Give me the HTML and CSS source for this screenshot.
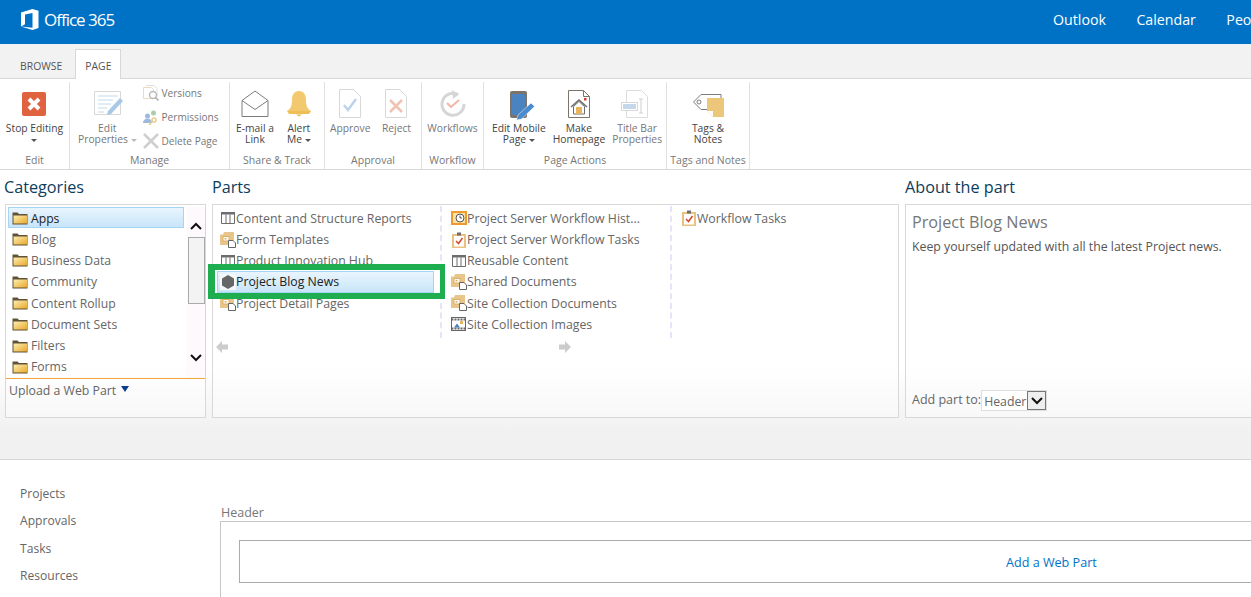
FILE: index.html
```html
<!DOCTYPE html>
<html lang="en">
  <head>
    <meta charset="UTF-8" />
    <title>Project Blog News - Add a part</title>
    <link rel="stylesheet" href="styles.css">
  </head>
  <body>
    <svg class="defs" width="0" height="0">
      <defs>
        <linearGradient id="folderFill" x1="0" y1="0" x2="1" y2="1">
          <stop offset="0" stop-color="#fdeeb0"/>
          <stop offset="1" stop-color="#e9a92c"/>
        </linearGradient>
      </defs>
      <symbol id="folder" viewBox="0 0 16 16">
        <path d="M.5 2.500h5l1.500 1.500h8.500v10.500H.5z" fill="#5f5238"/>
        <path d="M1.500 5.500h13.500v8H1.500z" fill="url(#folderFill)"/>
      </symbol>
      <symbol id="table" viewBox="0 0 16 16">
        <path d="M1.500 2.500h13v11h-13z M6 4.500v9 M10 4.500v9" fill="#fff" stroke="#6d6d6d"/>
        <path d="M1 2h14v2.500H1z" fill="#6d6d6d"/>
      </symbol>
      <symbol id="doclib" viewBox="0 0 16 16">
        <path d="M0 2.500h3l1-2.500h10v13H0z" fill="#e8c58a"/>
        <path d="M3 4.500h6v4.500H3z" fill="#fff" stroke="#dcae62"/>
        <rect x="4.500" y="6" width="2" height="1.500" fill="#dcae62"/>
        <path d="M8.500 8.500h4.500l2.500 2.500v4.500h-7z" fill="#fff" stroke="#666"/>
      </symbol>
      <symbol id="tasks" viewBox="0 0 16 16">
        <path d="M1 2h14v14H1z" fill="#e8c27e"/>
        <path d="M3 4h10v10.500H3z" fill="#fff"/>
        <path d="M6 .5h4v3H6z" fill="#6d6d6d"/>
        <path d="M5 9l2.500 2.500L11.500 6" fill="none" stroke="#d0492a" stroke-width="1.500"/>
      </symbol>
    </svg>

    <header class="suite-bar">
      <div class="brand">
        <svg class="brand-mark" width="18" height="21" viewBox="0 0 18 21">
          <path d="M0 3.500L11.500 0 17.500 1.800V19L11.500 21 0 17.500l11.500 1.300V4L4 5.600v9.600L0 17.500z" fill="#fff"/>
        </svg>
        <span>Office 365</span>
      </div>
      <nav class="suite-nav">
        <a>Outlook</a>
        <a>Calendar</a>
        <a>People</a>
      </nav>
    </header>

    <div class="tab-row">
      <span class="tab">BROWSE</span>
      <span class="tab active">PAGE</span>
    </div>

    <div class="ribbon">
      <section class="group group-edit">
        <div class="group-body">
          <div class="cmd">
            <svg class="cmd-icon" width="32" height="32" viewBox="0 0 32 32">
              <rect x="4" y="4" width="24" height="24" rx="2" fill="#e0633f"/>
              <path d="M11 11l10 10M21 11L11 21" stroke="#fff" stroke-width="4"/>
            </svg>
            <span>Stop Editing</span>
            <i class="caret"></i>
          </div>
        </div>
        <div class="group-label">Edit</div>
      </section>

      <section class="group group-manage">
        <div class="group-body">
          <div class="cmd off">
            <svg class="cmd-icon" width="32" height="32" viewBox="0 0 32 32">
              <path d="M3.500 3.500h26v23h-26z" fill="#fff" stroke="#d8d8d8"/>
              <path d="M7 8h20M7 12h15M7 16h13M7 20h9M7 24h6" stroke="#c4d8ea"/>
              <path d="M29 10l3 3-12 13-4 1 1-4z" fill="#a9c8e6"/>
            </svg>
            <span>Edit</span>
            <span>Properties <i class="caret inline"></i></span>
          </div>
          <div class="small-stack off">
            <div class="small-cmd">
              <svg width="16" height="16" viewBox="0 0 16 16">
                <path d="M.5 2.500h8l2 2v9h-10z" fill="#fff" stroke="#eadbbd"/>
                <path d="M3 .5h8l3 3v8" fill="none" stroke="#ddd"/>
                <circle cx="10" cy="10" r="3.500" fill="#fff" stroke="#bbb" stroke-width="1.500"/>
                <path d="M12.500 12.500l3 3" stroke="#aaa" stroke-width="1.500"/>
              </svg>
              <span>Versions</span>
            </div>
            <div class="small-cmd">
              <svg width="16" height="16" viewBox="0 0 16 16">
                <circle cx="4.500" cy="7" r="2.500" fill="#9db9dc"/>
                <path d="M0 14c0-6 9-6 9 0z" fill="#9db9dc"/>
                <circle cx="10.500" cy="4" r="2.500" fill="#a9cfa9"/>
                <circle cx="11" cy="11" r="2" fill="none" stroke="#ecc98b" stroke-width="1.500"/>
                <path d="M9.500 12.500L6 16" stroke="#ecc98b" stroke-width="1.500"/>
              </svg>
              <span>Permissions</span>
            </div>
            <div class="small-cmd">
              <svg width="16" height="16" viewBox="0 0 16 16">
                <path d="M1 1l14 14M15 1L1 15" stroke="#cfcfcf" stroke-width="2.500"/>
              </svg>
              <span>Delete Page</span>
            </div>
          </div>
        </div>
        <div class="group-label">Manage</div>
      </section>

      <section class="group group-share">
        <div class="group-body">
          <div class="cmd">
            <svg class="cmd-icon" width="32" height="32" viewBox="0 0 32 32">
              <path d="M3 12.500L16 3l13 9.500v16H3z" fill="#fff" stroke="#7c7c7c"/>
              <path d="M3 12.500l13 9 13-9" fill="none" stroke="#7c7c7c"/>
            </svg>
            <span>E-mail a</span>
            <span>Link</span>
          </div>
          <div class="cmd">
            <svg class="cmd-icon" width="32" height="32" viewBox="0 0 32 32">
              <path d="M16 3c5 0 7 4 7 9 0 7 2 9 5 11H4c3-2 5-4 5-11 0-5 2-9 7-9z" fill="#f2c96e"/>
              <path d="M4 23h24l-2 3H6z" fill="#efbf55"/>
              <path d="M13 26.500h6l-3 2z" fill="#e8b74d"/>
            </svg>
            <span>Alert</span>
            <span>Me <i class="caret inline dark"></i></span>
          </div>
        </div>
        <div class="group-label">Share &amp; Track</div>
      </section>

      <section class="group group-approval">
        <div class="group-body">
          <div class="cmd off">
            <svg class="cmd-icon" width="32" height="32" viewBox="0 0 32 32">
              <path d="M5.500 1.500h14l7 7v21h-21z" fill="#fff" stroke="#d8d8d8"/>
              <path d="M10 17l4 5 8-11" fill="none" stroke="#bcd3ec" stroke-width="2.500"/>
            </svg>
            <span>Approve</span>
          </div>
          <div class="cmd off">
            <svg class="cmd-icon" width="32" height="32" viewBox="0 0 32 32">
              <path d="M5.500 1.500h14l7 7v21h-21z" fill="#fff" stroke="#d8d8d8"/>
              <path d="M10 12l12 12M22 12L10 24" stroke="#f0c3b4" stroke-width="2.500"/>
            </svg>
            <span>Reject</span>
          </div>
        </div>
        <div class="group-label">Approval</div>
      </section>

      <section class="group group-workflow">
        <div class="group-body">
          <div class="cmd off">
            <svg class="cmd-icon" width="32" height="32" viewBox="0 0 32 32">
              <path d="M21 6.500A11 11 0 1 0 27 16" fill="none" stroke="#d6d6d6" stroke-width="3"/>
              <path d="M15 2l7 4.500L16 11z" fill="#d6d6d6"/>
              <path d="M10 15l4 4 8-7" fill="none" stroke="#f3b5a5" stroke-width="2"/>
            </svg>
            <span>Workflows</span>
          </div>
        </div>
        <div class="group-label">Workflow</div>
      </section>

      <section class="group group-actions">
        <div class="group-body">
          <div class="cmd">
            <svg class="cmd-icon" width="32" height="32" viewBox="0 0 32 32">
              <rect x="7" y="3" width="17" height="27" rx="2" fill="#7c7468"/>
              <rect x="9" y="6" width="13" height="21" fill="#4a83c0"/>
              <path d="M28 15l3.500 3.500-13 12.500-5 1 1.500-5z" fill="#4a8bd0" stroke="#fff" stroke-width=".5"/>
            </svg>
            <span>Edit Mobile</span>
            <span>Page <i class="caret inline dark"></i></span>
          </div>
          <div class="cmd">
            <svg class="cmd-icon" width="32" height="32" viewBox="0 0 32 32">
              <path d="M5.500 2.500h15l6 6v21h-21z" fill="#fff" stroke="#7c7468"/>
              <path d="M20.500 2.500v6h6" fill="none" stroke="#7c7468"/>
              <path d="M10.500 18.500l5.500-5 5.500 5V26h-11z" fill="#fff" stroke="#6d6d6d"/>
              <path d="M8 19l8-7 8 7" fill="none" stroke="#6d6d6d" stroke-width="1.500"/>
              <rect x="13" y="19" width="6" height="7" fill="#e8b45e"/>
              <rect x="21" y="10" width="2.500" height="2.500" fill="#d23c2c"/>
            </svg>
            <span>Make</span>
            <span>Homepage</span>
          </div>
          <div class="cmd off">
            <svg class="cmd-icon" width="32" height="32" viewBox="0 0 32 32">
              <path d="M5.500 2.500h15l6 6v21h-21z" fill="#fff" stroke="#dcdcdc"/>
              <rect x=".5" y="14.500" width="16" height="8" fill="#fff" stroke="#d8d8d8"/>
              <rect x="2" y="16" width="13" height="5" fill="#c4d8ea"/>
              <path d="M18 11h4M18 25h4M20 11v14" fill="none" stroke="#cfcfcf"/>
            </svg>
            <span>Title Bar</span>
            <span>Properties</span>
          </div>
        </div>
        <div class="group-label">Page Actions</div>
      </section>

      <section class="group group-tags">
        <div class="group-body">
          <div class="cmd">
            <svg class="cmd-icon" width="32" height="32" viewBox="0 0 32 32">
              <path d="M1.500 14L9 6.500h20V11" fill="#fff" stroke="#7c7c7c"/>
              <path d="M1.500 14L9 21.500h6" fill="none" stroke="#7c7c7c"/>
              <circle cx="7" cy="14" r="2" fill="#fff" stroke="#7c7c7c"/>
              <path d="M15 10h17v19H21l-6-6z" fill="#ecc679"/>
              <path d="M15 23h6v6z" fill="#fff"/>
            </svg>
            <span>Tags &amp;</span>
            <span>Notes</span>
          </div>
        </div>
        <div class="group-label">Tags and Notes</div>
      </section>
    </div>

    <main class="adder">
      <section class="pane pane-cats">
        <h2>Categories</h2>
        <div class="box cats-box">
          <div class="cats-top">
            <ul class="cats-list">
              <li class="selected"><svg width="16" height="16"><use href="#folder"/></svg>Apps</li>
              <li><svg width="16" height="16"><use href="#folder"/></svg>Blog</li>
              <li><svg width="16" height="16"><use href="#folder"/></svg>Business Data</li>
              <li><svg width="16" height="16"><use href="#folder"/></svg>Community</li>
              <li><svg width="16" height="16"><use href="#folder"/></svg>Content Rollup</li>
              <li><svg width="16" height="16"><use href="#folder"/></svg>Document Sets</li>
              <li><svg width="16" height="16"><use href="#folder"/></svg>Filters</li>
              <li><svg width="16" height="16"><use href="#folder"/></svg>Forms</li>
            </ul>
            <div class="scrollbar">
              <svg width="12" height="8" viewBox="0 0 12 8"><path d="M1 7l5-5 5 5" fill="none" stroke="#111" stroke-width="2"/></svg>
              <div class="thumb"></div>
              <svg class="scroll-down" width="12" height="8" viewBox="0 0 12 8"><path d="M1 1l5 5 5-5" fill="none" stroke="#111" stroke-width="2"/></svg>
            </div>
          </div>
          <div class="upload">Upload a Web Part <i class="upload-caret"></i></div>
        </div>
      </section>

      <section class="pane pane-parts">
        <h2>Parts</h2>
        <div class="box parts-box">
          <div class="parts-cols">
            <ul class="parts-col">
              <li><svg width="16" height="16"><use href="#table"/></svg>Content and Structure Reports</li>
              <li><svg width="16" height="16"><use href="#doclib"/></svg>Form Templates</li>
              <li><svg width="16" height="16"><use href="#table"/></svg>Product Innovation Hub</li>
              <li class="selected">
                <svg width="16" height="16" viewBox="0 0 16 16"><rect width="16" height="16" fill="#f4f8fb"/><path d="M8 1l6 3.500v7L8 15l-6-3.500v-7z" fill="#666"/></svg>Project Blog News
              </li>
              <li><svg width="16" height="16"><use href="#doclib"/></svg>Project Detail Pages</li>
            </ul>
            <ul class="parts-col mid">
              <li>
                <svg width="16" height="16" viewBox="0 0 16 16"><rect width="16" height="14" y="1" fill="#ee9a2c"/><rect x="2" y="3" width="12" height="10" fill="#fbe3a8"/><circle cx="9" cy="8" r="4" fill="#fff" stroke="#555"/><path d="M9 5.500V8h2" fill="none" stroke="#555"/></svg>Project Server Workflow Hist...
              </li>
              <li><svg width="16" height="16"><use href="#tasks"/></svg>Project Server Workflow Tasks</li>
              <li><svg width="16" height="16"><use href="#table"/></svg>Reusable Content</li>
              <li><svg width="16" height="16"><use href="#doclib"/></svg>Shared Documents</li>
              <li><svg width="16" height="16"><use href="#doclib"/></svg>Site Collection Documents</li>
              <li>
                <svg width="16" height="16" viewBox="0 0 16 16"><rect x=".5" y="1.500" width="14" height="13" fill="#fff" stroke="#666"/><path d="M.5 3.500h14M.5 12.500h14" stroke="#666" stroke-width="2" stroke-dasharray="2 1"/><path d="M3 11.500l3-4 3 4z" fill="#4a83c0"/><rect x="9" y="5" width="3" height="3" fill="#e8b45e"/></svg>Site Collection Images
              </li>
            </ul>
            <ul class="parts-col last">
              <li><svg width="16" height="16"><use href="#tasks"/></svg>Workflow Tasks</li>
            </ul>
          </div>
          <div class="pager">
            <svg width="12" height="12" viewBox="0 0 12 12"><path d="M0 6l6-6v3.500h6v5H6V12z" fill="#ccc"/></svg>
            <svg width="12" height="12" viewBox="0 0 12 12"><path d="M12 6L6 0v3.500H0v5h6V12z" fill="#ccc"/></svg>
          </div>
          <div class="highlight"></div>
        </div>
      </section>

      <section class="pane pane-about">
        <h2>About the part</h2>
        <div class="box about-box">
          <div>
            <h3>Project Blog News</h3>
            <p>Keep yourself updated with all the latest Project news.</p>
          </div>
          <div class="add-to">
            <span class="add-label">Add part to:</span>
            <span class="select">Header<i class="select-btn"><svg width="12" height="8" viewBox="0 0 12 8"><path d="M1 1l5 5 5-5" fill="none" stroke="#111" stroke-width="2"/></svg></i></span>
          </div>
        </div>
      </section>
    </main>

    <div class="page-body">
      <ul class="quick-nav">
        <li>Projects</li>
        <li>Approvals</li>
        <li>Tasks</li>
        <li>Resources</li>
      </ul>
      <div class="zone-wrap">
        <div class="zone-title">Header</div>
        <div class="zone">
          <div class="zone-add">Add a Web Part</div>
        </div>
      </div>
    </div>
  </body>
</html>
```

FILE: styles.css
```css
html,
body {
  margin: 0;
  height: 597px;
  overflow: hidden;
}
body {
  width: 1251px;
  font-family: "Open Sans", "Noto Sans", sans-serif;
  font-size: 12.3px;
  color: #666;
  background-color: #fff;
}
ul {
  list-style: none;
  margin: 0;
  padding: 0;
}
.defs {
  position: absolute;
}

/* top bar */
.suite-bar {
  display: flex;
  justify-content: space-between;
  height: 44px;
  background-color: #0072c6;
  color: #fff;
}
.brand {
  display: flex;
  align-items: center;
  gap: 5px;
  padding: 0 0 5px 21px;
  font-size: 17px;
  letter-spacing: -1px;
}
.suite-nav {
  display: flex;
  align-items: center;
  gap: 30.500px;
  width: 198px;
  padding-bottom: 6px;
  font-size: 14.2px;
  white-space: nowrap;
  overflow: hidden;
}

/* tabs */
.tab-row {
  display: flex;
  align-items: flex-end;
  height: 34px;
  padding-left: 7px;
  background-color: #f2f2f2;
  border-bottom: 1px solid #d8d8d8;
}
.tab {
  height: 29px;
  line-height: 33px;
  padding: 0 12px;
  font-size: 10.4px;
  color: #555;
  margin-bottom: -1px;
  border: 1px solid transparent;
  border-bottom: 0;
}
.tab.active {
  background-color: #fff;
  border-color: #d8d8d8;
  padding: 0 9px;
}

/* ribbon */
.ribbon {
  display: flex;
  height: 90px;
  border-bottom: 1px solid #d8d8d8;
  font-size: 10.3px;
  line-height: 11px;
  color: #444;
}
.group {
  display: flex;
  flex-direction: column;
  margin-top: 3px;
  border-right: 1px solid #e1e1e1;
  box-sizing: border-box;
}
.group-edit { width: 70px; }
.group-manage { width: 160px; }
.group-share { width: 95px; }
.group-approval { width: 97px; }
.group-workflow { width: 62px; }
.group-actions { width: 183px; }
.group-tags { width: 83px; }
.group-body {
  display: flex;
  justify-content: center;
  height: 67px;
  flex: none;
}
.group-manage .group-body {
  justify-content: flex-start;
  gap: 6px;
  padding-left: 8px;
}
.group-share .group-body {
  justify-content: flex-start;
  gap: 9px;
  padding-left: 6px;
}
.group-approval .group-body {
  justify-content: flex-start;
  gap: 10px;
  padding-left: 5px;
}
.group-actions .group-body {
  justify-content: flex-start;
  gap: 7px;
  padding-left: 8px;
}
.group-label {
  height: 23px;
  line-height: 23px;
  font-size: 10.5px;
  text-align: center;
  color: #777;
}
.cmd {
  display: flex;
  flex-direction: column;
  align-items: center;
  white-space: nowrap;
}
.cmd-icon {
  margin: 6px 0 3px;
  overflow: hidden;
}
.off {
  color: #777;
}
.caret {
  display: block;
  width: 0;
  height: 0;
  margin-top: 5px;
  border: 3px solid transparent;
  border-top-color: #555;
  border-bottom: 0;
}
.caret.inline {
  display: inline-block;
  margin: 0 0 1px 0;
  border-top-color: #bbb;
}
.caret.dark {
  border-top-color: #555;
}
.small-stack {
  display: flex;
  flex-direction: column;
  gap: 8px;
  padding-top: 3px;
  font-size: 10.1px;
}
.small-cmd {
  display: flex;
  align-items: center;
  gap: 3px;
  white-space: nowrap;
}

/* web part adder */
.adder {
  display: flex;
  gap: 6px;
  height: 290px;
  padding-left: 5px;
  border-bottom: 1px solid #d8d8d8;
  background: linear-gradient(#fff 68%, #f1f1f1 90%);
  box-sizing: border-box;
}
.pane {
  flex: none;
}
.pane h2 {
  margin: 7px 0 6px -1px;
  font-size: 16.2px;
  line-height: 21px;
  font-weight: 400;
  color: #0d3d5c;
}
.box {
  position: relative;
  height: 214px;
  box-sizing: border-box;
  border: 1px solid #d8d8d8;
  background: linear-gradient(#fff 75%, #f8f8f8);
}
.pane-cats { width: 201px; }
.pane-parts { width: 687px; }
.pane-about { width: 360px; }
.pane-parts h2,
.pane-about h2 { margin-left: 0; }

.cats-box {
  display: flex;
  flex-direction: column;
}
.cats-top {
  display: flex;
  height: 174px;
  border-bottom: 1px solid #f3a33a;
  padding: 2px 0 0 2px;
  box-sizing: border-box;
}
.cats-list {
  width: 176px;
  flex: none;
  font-size: 12.2px;
}
.cats-list li {
  display: flex;
  align-items: center;
  gap: 3px;
  height: 21.3px;
  padding: 1px 0 0 4px;
  box-sizing: border-box;
  white-space: nowrap;
}
.cats-list .selected {
  height: 21px;
  padding: 1px 0 0 3px;
}
.cats-list .selected,
.parts-col .selected {
  color: #222;
  border: 1px solid #a6d4f2;
  background: linear-gradient(#e9f5fd, #c8e5f9);
}
.scrollbar {
  display: flex;
  flex-direction: column;
  align-items: center;
  flex: none;
  width: 18px;
  margin-left: 3px;
  padding: 15px 0 16px;
  box-sizing: border-box;
  background-color: #fdf9fd;
}
.thumb {
  flex: none;
  width: 17px;
  height: 67px;
  margin-top: 7px;
  box-sizing: border-box;
  border: 1px solid #aaa;
  background-color: #f3f3f3;
}
.scroll-down {
  margin-top: auto;
}
.upload {
  padding: 3px 0 0 3px;
  font-size: 12.3px;
}
.upload-caret {
  display: inline-block;
  margin: 0 0 3px 2px;
  border: 4.500px solid transparent;
  border-top: 6px solid #0d3d8c;
  border-bottom: 0;
}

.parts-cols {
  display: flex;
  padding-top: 1px;
}
.parts-col {
  flex: none;
  width: 229px;
  height: 132px;
  padding: 1.800px 4px 0 7px;
  box-sizing: border-box;
  border-right: 2px dashed #e4e4fb;
  font-size: 12.3px;
}
.parts-col.mid {
  width: 230px;
  padding-left: 9px;
}
.parts-col.last {
  width: 220px;
  border-right: 0;
  padding-left: 9px;
}
.parts-col li {
  display: flex;
  align-items: center;
  height: 21.2px;
  box-sizing: border-box;
  white-space: nowrap;
}
.parts-col li svg {
  flex: none;
}
.parts-col .selected {
  margin: 0 2px 0 -3px;
  padding-left: 2px;
}
.pager {
  display: flex;
  gap: 331px;
  padding: 3px 0 0 3px;
}
.highlight {
  position: absolute;
  left: -5px;
  top: 59px;
  width: 237px;
  height: 35px;
  box-sizing: border-box;
  border: 6px solid #1fae4f;
  border-left-width: 7px;
  border-right-width: 5px;
}

.about-box {
  display: flex;
  flex-direction: column;
  justify-content: space-between;
  padding: 6px 6px 6px;
}
.about-box h3 {
  margin: 0;
  font-size: 16.2px;
  line-height: 22px;
  font-weight: 400;
  color: #777;
}
.about-box p {
  margin: 6px 0 0;
  font-size: 12.3px;
  line-height: 16px;
  color: #555;
}
.add-to {
  display: flex;
  align-items: center;
  font-size: 12.3px;
}
.add-label {
  padding-bottom: 2px;
  font-size: 12.5px;
}
.select {
  display: flex;
  align-items: center;
  height: 21px;
  padding: 2px 0 0 2px;
  box-sizing: border-box;
  border: 1px solid #ddd;
  background-color: #fff;
}
.select-btn {
  display: flex;
  align-items: center;
  justify-content: center;
  width: 17px;
  height: 17px;
  margin: -2px 0 0 1px;
  border: 1px solid #777;
  background-color: #eee;
}

/* content below */
.page-body {
  display: flex;
}
.quick-nav {
  width: 220px;
  flex: none;
  padding: 20px 0 0 20px;
  box-sizing: border-box;
  font-size: 12.1px;
  line-height: 27.300px;
}
.zone-wrap {
  flex: none;
  width: 1100px;
  padding-top: 44px;
}
.zone-title {
  height: 17px;
  line-height: 17px;
  font-size: 12.5px;
  color: #777;
  padding-left: 1px;
}
.zone {
  height: 200px;
  padding: 18px 18px 0;
  box-sizing: border-box;
  border: 1px solid #c6c6c6;
}
.zone-add {
  width: 1623px;
  height: 43px;
  line-height: 43px;
  padding-left: 766px;
  box-sizing: border-box;
  border: 1px solid #ababab;
  color: #0072c6;
  font-size: 12.6px;
}
```
